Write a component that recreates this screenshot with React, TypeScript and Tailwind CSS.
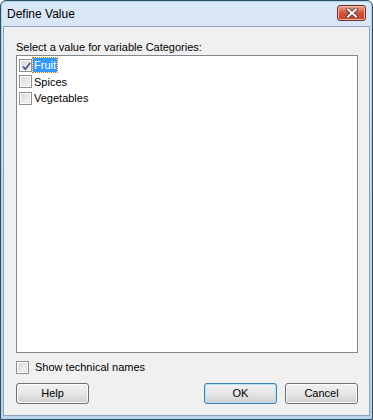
import React, { useState } from 'react';

const font = { fontFamily: '"Liberation Sans", Arial, sans-serif' };

const Check = ({ checked }: { checked: boolean }) => (
  <span className="relative inline-block w-[13px] h-[13px] shrink-0 border border-[#8e8f8f] bg-white">
    <span className="absolute inset-[1px] border border-[#e2e2e2] bg-gradient-to-br from-[#d9d9d9] to-[#f7f7f7]" />
    {checked && (
      <svg className="absolute left-[1px] top-[1px]" width="11" height="11" viewBox="0 0 11 11">
        <path d="M2 5.5 L4.3 8.2 L9.2 1.8" fill="none" stroke="#4a5f97" strokeWidth="1.8" />
      </svg>
    )}
  </span>
);

const Button = ({ label, primary }: { label: string; primary?: boolean }) => (
  <button
    className={
      'w-[73px] h-[21px] rounded-[3px] border text-[11px] text-black bg-gradient-to-b from-[#f2f2f2] via-[#e6e6e6] to-[#cfcfcf] ' +
      (primary ? 'border-[#3c7fb1] shadow-[inset_0_0_0_1px_#b6e2f8]' : 'border-[#707070] shadow-[inset_0_0_0_1px_#fbfbfb]')
    }
    style={font}
  >
    {label}
  </button>
);

export default function App() {
  const items = ['Fruit', 'Spices', 'Vegetables'];
  const [checked] = useState<Record<string, boolean>>({ Fruit: true });

  return (
    <div
      className="w-[373px] h-[420px] flex flex-col border border-[#3a4a5c] rounded-t-[6px] bg-gradient-to-b from-[#dbe8f6] via-[#c5d9ef] to-[#bcd2ea] shadow-[inset_0_0_0_1px_#9fd8f2]"
      style={font}
    >
      {/* Title bar */}
      <div className="h-[25px] flex items-start justify-between pl-[6px] pr-[6px] shrink-0">
        <span className="text-[12px] text-black mt-[6px] leading-[14px]">Define Value</span>
        <div className="mt-[4px] w-[29px] h-[16px] rounded-[3px] border border-[#6e2b24] bg-gradient-to-b from-[#e8a493] via-[#d0533b] to-[#c3412a] flex items-center justify-center shadow-[inset_0_0_0_1px_#f0b9ab]">
          <svg width="12" height="10" viewBox="0 0 12 10">
            <path d="M2 1.5 L10 8.5 M10 1.5 L2 8.5" stroke="#4a2a26" strokeWidth="3.6" strokeLinecap="square" />
            <path d="M2 1.5 L10 8.5 M10 1.5 L2 8.5" stroke="#ffffff" strokeWidth="2" strokeLinecap="square" />
          </svg>
        </div>
      </div>

      {/* Client */}
      <div className="flex-1 mx-[2px] mb-[3px] bg-[#f0f0f0] border border-[#8da2ba] flex flex-col pl-[12px] pr-[11px]">
        <div className="text-[11px] leading-[13px] text-black mt-[14px]">Select a value for variable Categories:</div>
        <div className="mt-[1px] h-[298px] border border-[#828790] bg-white pl-[2px] pt-[1px]">
          {items.map((it) => (
            <div key={it} className="h-[16.5px] flex items-center">
              <Check checked={!!checked[it]} />
              <span
                className={
                  'ml-[1px] px-[1px] h-[14px] leading-[14px] text-[11px] ' +
                  (it === 'Fruit' ? 'bg-[#3399ff] text-white outline outline-1 outline-dotted outline-[#c47a1a]' : 'text-black')
                }
              >
                {it}
              </span>
            </div>
          ))}
        </div>
        <div className="mt-[8px] flex items-center h-[13px]">
          <Check checked={false} />
          <span className="ml-[6px] text-[11px] text-black">Show technical names</span>
        </div>
        <div className="mt-[9px] flex items-center">
          <Button label="Help" />
          <div className="flex-1" />
          <Button label="OK" primary />
          <div className="w-[8px]" />
          <Button label="Cancel" />
        </div>
      </div>
    </div>
  );
}
